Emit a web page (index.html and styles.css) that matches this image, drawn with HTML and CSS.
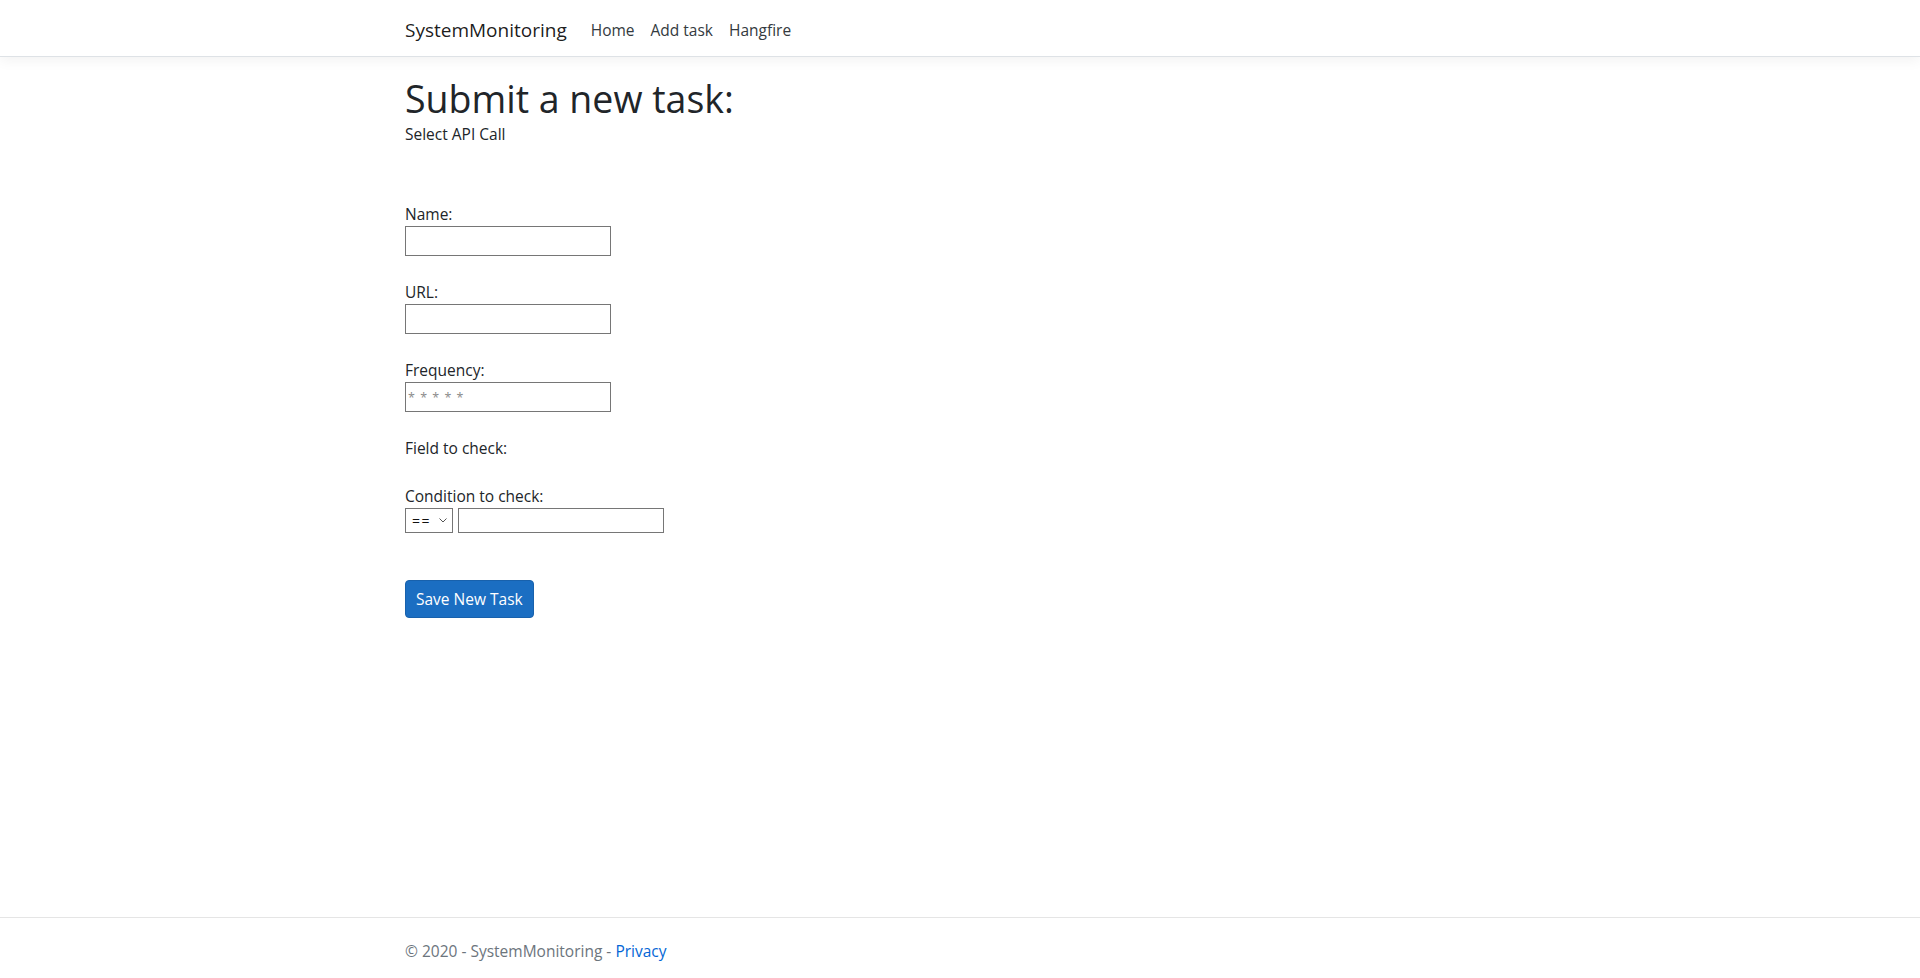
FILE: index.html
```html
<!DOCTYPE html>
<html lang="en">
<head>
<meta charset="utf-8">
<title>Add task - SystemMonitoring</title>
<link rel="stylesheet" href="styles.css">
</head>
<body>
<header class="topbar">
  <div class="container nav-inner">
    <a class="brand" href="#">SystemMonitoring</a>
    <nav class="nav-links">
      <a class="nav-link" href="#">Home</a>
      <a class="nav-link" href="#">Add task</a>
      <a class="nav-link" href="#">Hangfire</a>
    </nav>
  </div>
</header>

<main class="container main">
  <h1 class="page-title">Submit a new task:</h1>
  <div class="subtitle">Select API Call</div>

  <form class="task-form">
    <div class="group">
      <label class="label" for="name">Name:</label>
      <input class="text-input" id="name" type="text">
    </div>
    <div class="group">
      <label class="label" for="url">URL:</label>
      <input class="text-input" id="url" type="text">
    </div>
    <div class="group">
      <label class="label" for="freq">Frequency:</label>
      <input class="text-input" id="freq" type="text" placeholder="* * * * *">
    </div>
    <div class="group">
      <label class="label">Field to check:</label>
    </div>
    <div class="group">
      <label class="label" for="cond">Condition to check:</label>
      <div class="cond-row">
        <select class="op-select" id="cond">
          <option>==</option>
          <option>!=</option>
        </select>
        <input class="cond-input" type="text">
      </div>
    </div>
    <button class="btn-primary" type="button">Save New Task</button>
  </form>
</main>

<footer class="footer">
  <div class="container">© 2020 - SystemMonitoring - <a class="footer-link" href="#">Privacy</a></div>
</footer>
</body>
</html>
```

FILE: styles.css
```css
* { box-sizing: border-box; }

html, body {
  margin: 0;
  padding: 0;
}

body {
  font-family: "Open Sans", "Noto Sans", "Liberation Sans", sans-serif;
  font-size: 15.5px;
  line-height: 24px;
  color: #212529;
  background: #fff;
  min-height: 100vh;
  display: flex;
  flex-direction: column;
}

a { text-decoration: none; }

.container {
  width: 1140px;
  margin: 0 auto;
  padding: 0 15px;
}

.topbar {
  height: 57px;
  border-bottom: 1px solid #dee2e6;
  box-shadow: 0 4px 12px rgba(0, 0, 0, 0.05);
  background: #fff;
  margin-bottom: 16px;
}

.nav-inner {
  height: 56px;
  display: flex;
  align-items: center;
}

.brand {
  font-size: 19px;
  line-height: 30px;
  color: rgba(0, 0, 0, 0.9);
  margin-right: 16px;
  padding-top: 3px;
}

.nav-links {
  display: flex;
}

.nav-link {
  color: #343a40;
  padding: 0 8px;
  font-size: 15.5px;
  line-height: 24px;
  padding-top: 4px;
}

.main {
  flex: 1 0 auto;
}

.page-title {
  font-size: 37.5px;
  font-weight: 400;
  line-height: 48px;
  margin: 2px 0 -1px;
}

.subtitle {
  margin-bottom: 56px;
}

.task-form {
  display: flex;
  flex-direction: column;
  align-items: flex-start;
}

.group {
  display: flex;
  flex-direction: column;
  align-items: flex-start;
  margin-bottom: 24px;
}

.label {
  display: block;
  line-height: 24px;
}

.text-input {
  width: 206px;
  height: 30px;
  border: 1px solid #767676;
  border-radius: 0;
  padding: 1px 2px;
  font-family: "Open Sans", "Liberation Sans", sans-serif;
  font-size: 12.5px;
  color: #212529;
  outline: none;
}

.text-input::placeholder {
  color: #8a8a8a;
  letter-spacing: 1px;
}

.cond-row {
  display: flex;
  gap: 5px;
}

.op-select {
  -webkit-appearance: none;
  appearance: none;
  width: 48px;
  height: 25px;
  border: 1px solid #767676;
  border-radius: 0;
  padding: 0 0 0 6px;
  font-family: "Open Sans", "Liberation Sans", sans-serif;
  font-size: 14px;
  letter-spacing: 1.5px;
  color: #111;
  background: #fff url("data:image/svg+xml,%3Csvg xmlns='http://www.w3.org/2000/svg' width='8' height='5' viewBox='0 0 8 5'%3E%3Cpath d='M0.5 0.5 L4 4 L7.5 0.5' fill='none' stroke='%23555' stroke-width='1'/%3E%3C/svg%3E") no-repeat right 5px center;
  outline: none;
}

.cond-input {
  width: 206px;
  height: 25px;
  border: 1px solid #767676;
  border-radius: 0;
  padding: 1px 2px;
  font-size: 12.5px;
  outline: none;
}

.btn-primary {
  margin-top: 23px;
  height: 38px;
  border: 1px solid #1861ac;
  border-radius: 4px;
  background: #1b6ec2;
  color: #fff;
  font-family: "Open Sans", "Liberation Sans", sans-serif;
  font-size: 15.5px;
  line-height: 24px;
  padding: 6px 10px;
  white-space: nowrap;
  cursor: pointer;
}

.footer {
  border-top: 1px solid #e5e5e5;
  height: 61px;
  line-height: 60px;
  padding-top: 3px;
  color: #6c757d;
  font-size: 15.5px;
  white-space: nowrap;
}

.footer-link {
  color: #0366d6;
}
```
